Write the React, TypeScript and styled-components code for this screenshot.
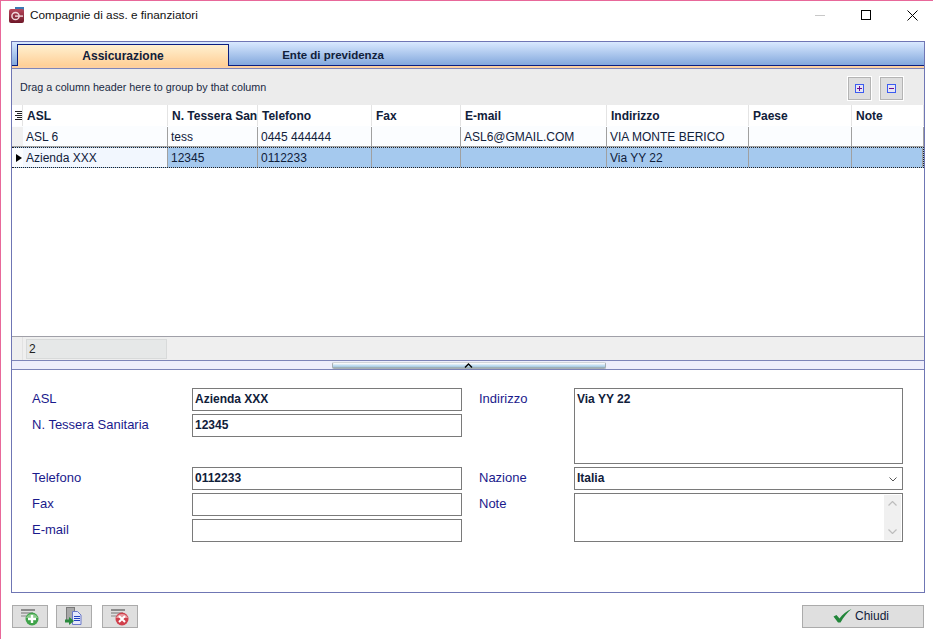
import React from 'react';
import styled, { createGlobalStyle } from 'styled-components';

const GlobalStyle = createGlobalStyle`
  html, body { margin: 0; padding: 0; background: #fff; }
  body { font-family: "Liberation Sans", Arial, sans-serif; font-size: 12px; color: #000; }
`;

const Win = styled.div`
  width: 933px;
  height: 639px;
  box-sizing: border-box;
  border-top: 1px solid #e8689a;
  border-left: 1px solid #e8689a;
  display: flex;
  flex-direction: column;
  overflow: hidden;
  background: #fff;
`;

const TitleBar = styled.div`
  height: 28px;
  margin-bottom: 2px;
  flex: none;
  display: flex;
  align-items: center;
  padding-left: 8px;
  gap: 5px;
  font-size: 11.8px;
  color: #111;
`;

const Title = styled.span`
  flex: 1;
`;

const WinButtons = styled.div`
  display: flex;
  align-items: center;
  margin-right: -2px;
`;

const WinBtn = styled.div`
  width: 46px;
  height: 28px;
  display: flex;
  align-items: center;
  justify-content: center;
`;

const Panel = styled.div`
  margin: 10px 8px 0 10px;
  height: 552px;
  box-sizing: border-box;
  border: 1px solid #6f76b4;
  display: flex;
  flex-direction: column;
  flex: none;
`;

const TabStrip = styled.div`
  height: 24px;
  box-sizing: border-box;
  flex: none;
  display: flex;
  padding: 2px 0 0 5px;
  background: linear-gradient(to bottom, #d9e9ff, #83a8dd);
  border-bottom: 1px solid #0b1f80;
`;

const Tab = styled.div<{ $active?: boolean }>`
  box-sizing: border-box;
  display: flex;
  align-items: center;
  justify-content: center;
  font-weight: bold;
  color: #10203a;
  ${p => p.$active ? `
    width: 212px;
    height: 22px;
    margin-bottom: -1px;
    font-size: 12px;
    background: linear-gradient(to bottom, #fff0d0, #ffcf96);
    border: 1px solid #0b1f80;
    border-bottom: none;
  ` : `
    width: 208px;
    height: 21px;
    font-size: 11.5px;
  `}
`;

const TabEdge = styled.div`
  height: 3px;
  box-sizing: border-box;
  flex: none;
  background: #fdd0a0;
  border-bottom: 1px solid #7d84b8;
`;

const GroupBar = styled.div`
  height: 36px;
  flex: none;
  background: #ececec;
  display: flex;
  align-items: center;
  justify-content: space-between;
  padding: 0 21px 0 8px;
  font-size: 10.75px;
  color: #1a2a44;
`;

const GroupText = styled.span`
  margin-top: -1px;
`;

const GroupTools = styled.div`
  display: flex;
  gap: 9px;
  margin-top: 3px;
`;

const ToolBtn = styled.div`
  width: 23px;
  height: 23px;
  box-sizing: border-box;
  background: #dedede;
  border: 1px solid #b4b4b4;
  outline: 1px solid #fff;
  display: flex;
  align-items: center;
  justify-content: center;
`;

const GridArea = styled.div`
  flex: 1;
  display: flex;
  flex-direction: column;
  background: #fff;
`;

const cols = '11px 145px 90px 114px 89px 146px 142px 103px 1fr';

const HeaderRow = styled.div`
  display: grid;
  grid-template-columns: ${cols};
  height: 21px;
  flex: none;
`;

const HeaderCell = styled.div`
  font-weight: bold;
  font-size: 12px;
  color: #10203a;
  padding: 4px 0 0 4px;
  border-right: 1px solid #e4e4e4;
  box-sizing: border-box;
  white-space: nowrap;
  overflow: hidden;
`;

const Corner = styled.div`
  display: flex;
  align-items: center;
  justify-content: center;
  padding-left: 2px;
  border-right: 1px solid #e4e4e4;
`;

const DataRow = styled.div<{ $selected?: boolean }>`
  display: grid;
  grid-template-columns: ${cols};
  height: 21px;
  box-sizing: border-box;
  flex: none;
  border-top: 1px solid #fbfdff;
  border-bottom: 1px solid #a0a0a0;
  background: #fbfdff;
  ${p => p.$selected && `
    background: #a5c9ee;
    border-top: 1px dotted #222;
    border-bottom: 1px dotted #222;
    border-right: 1px dotted #222;
  `}
`;

const Cell = styled.div<{ $first?: boolean }>`
  padding: 3px 0 0 3px;
  font-size: 12px;
  color: #10203a;
  box-sizing: border-box;
  border-right: 1px solid #a0a0a0;
  white-space: nowrap;
  overflow: hidden;
  ${p => p.$first && `background: #f2f7fe;`}
`;

const Indicator = styled.div<{ $current?: boolean }>`
  background: ${p => (p.$current ? '#fbfdff' : '#f0f0f0')};
  display: flex;
  align-items: center;
  justify-content: center;
`;

const Arrow = styled.div`
  width: 0;
  height: 0;
  border-left: 6px solid #000;
  border-top: 4.5px solid transparent;
  border-bottom: 4.5px solid transparent;
  margin-left: 2px;
`;

const Footer = styled.div`
  height: 25px;
  flex: none;
  box-sizing: border-box;
  background: #efefef;
  border-top: 1px solid #a0a0a8;
  border-bottom: 1px solid #7d84b8;
  display: flex;
`;

const FooterCorner = styled.div`
  width: 11px;
  box-sizing: border-box;
  border-right: 1px solid #e2e2e2;
  margin-right: 3px;
`;

const Counter = styled.div`
  width: 141px;
  height: 20px;
  margin-top: 2px;
  box-sizing: border-box;
  background: #e6e8e8;
  border: 1px solid #d8dada;
  padding: 2px 0 0 2px;
  font-size: 12px;
  color: #222;
`;

const Splitter = styled.div`
  height: 9px;
  flex: none;
  box-sizing: border-box;
  background: #eeeefb;
  border-bottom: 1px solid #7d84b8;
  padding-top: 1px;
  display: flex;
  justify-content: center;
  padding-right: 1px;
`;

const SplitHandle = styled.div`
  width: 274px;
  height: 7px;
  box-sizing: border-box;
  margin-left: 2px;
  border: 1px solid #a6aeb2;
  border-top-color: #d0d4d8;
  border-radius: 2px;
  background: linear-gradient(to bottom, #ffffff 0, #eef2f5 20%, #c4e0f4 45%, #b4d6ee 65%, #9cb0ba 90%);
  display: flex;
  justify-content: center;
  align-items: center;
`;

const Form = styled.div`
  height: 222px;
  flex: none;
  box-sizing: border-box;
  padding: 18px 0 0 20px;
  display: grid;
  grid-template-columns: 160px 270px 17px 95px 329px;
  grid-template-rows: 23px 23px 24px 23px 23px 23px;
  row-gap: 3px;
`;

const Label = styled.div<{ $col: number; $row: number }>`
  grid-column: ${p => p.$col};
  grid-row: ${p => p.$row};
  color: #1a1a8c;
  font-size: 13px;
  padding-top: 3px;
`;

const Input = styled.div<{ $row: number; $col?: number; $span?: number }>`
  grid-column: ${p => p.$col ?? 2};
  grid-row: ${p => p.$row} / span ${p => p.$span ?? 1};
  box-sizing: border-box;
  border: 1px solid #7a7a7a;
  background: #fff;
  font-weight: bold;
  font-size: 12px;
  padding: 3px 0 0 2px;
  color: #10203a;
  position: relative;
`;

const Chevron = styled.svg`
  position: absolute;
  right: 5px;
  top: 9px;
`;

const ScrollTrack = styled.div`
  position: absolute;
  top: 1px;
  right: 1px;
  bottom: 1px;
  width: 17px;
  background: #f0f0f0;
  display: flex;
  flex-direction: column;
  justify-content: space-between;
  align-items: center;
  padding: 6px 0;
  box-sizing: border-box;
`;

const BottomBar = styled.div`
  flex: 1;
  display: flex;
  align-items: flex-start;
  padding: 12px 9px 0 11px;
  gap: 8px;
`;

const ActionBtn = styled.div<{ $w: number; $offset?: number }>`
  width: ${p => p.$w}px;
  height: 23px;
  margin-left: ${p => p.$offset ?? 0}px;
  box-sizing: border-box;
  background: #dfdfdf;
  border: 1px solid #ababab;
  display: flex;
  align-items: center;
  justify-content: center;
`;

const CloseBtn = styled.div`
  width: 122px;
  height: 23px;
  margin-left: auto;
  padding: 0 4px 2px 0;
  box-sizing: border-box;
  background: #dfdfdf;
  border: 1px solid #ababab;
  display: flex;
  align-items: center;
  justify-content: center;
  gap: 3px;
  font-size: 12px;
  color: #10203a;
`;

const AppIcon = () => (
  <svg width="16" height="16" viewBox="0 0 16 16">
    <defs>
      <linearGradient id="appIconFill" x1="0" y1="0" x2="0" y2="1">
        <stop offset="0" stopColor="#b8485c" />
        <stop offset="1" stopColor="#6e1828" />
      </linearGradient>
    </defs>
    <rect x="6" y="0" width="9" height="5" fill="#3c78b4" />
    <rect x="0" y="2" width="15" height="14" rx="2" fill="url(#appIconFill)" />
    <circle cx="6.5" cy="9" r="3.6" fill="none" stroke="#f0d8dc" strokeWidth="1.5" />
    <rect x="6" y="8.4" width="8" height="1.4" fill="#f0d8dc" />
  </svg>
);

const ExpandIcon = ({ minus }: { minus?: boolean }) => (
  <svg width="9" height="9" viewBox="0 0 9 9">
    <rect x="0.5" y="0.5" width="8" height="8" fill="#e6e6f4" stroke="#3c5cf0" />
    <rect x="2" y="4" width="5" height="1" fill="#6a0a90" />
    {!minus && <rect x="4" y="2" width="1" height="5" fill="#6a0a90" />}
  </svg>
);

const Lines = () => (
  <>
    <rect x="2" y="2" width="14" height="2" fill="#8c8c8c" />
    <rect x="2" y="5" width="12" height="2" fill="#a8a8a8" />
    <rect x="2" y="8" width="8" height="2" fill="#b4b4b4" />
  </>
);

const AddIcon = () => (
  <svg width="22" height="19" viewBox="0 0 22 19">
    <Lines />
    <circle cx="13" cy="12" r="6.5" fill="#3fa34a" />
    <path d="M7 11a6.5 6.5 0 0 1 12 0z" fill="#8acb8c" />
    <rect x="11.8" y="8" width="2.4" height="8" fill="#fff" />
    <rect x="9" y="10.8" width="8" height="2.4" fill="#fff" />
  </svg>
);

const ImportIcon = () => (
  <svg width="20" height="19" viewBox="0 0 20 19">
    <rect x="2.5" y="0.5" width="8" height="14" fill="#a8a8a8" stroke="#7a7a7a" />
    <path d="M8.5 4.5h5l3.5 3.5v9.5h-8.5z" fill="#e4e8fb" stroke="#6a78c8" />
    <rect x="10" y="9" width="6" height="1" fill="#2040c0" />
    <rect x="10" y="11" width="6" height="1" fill="#2040c0" />
    <rect x="10" y="13" width="6" height="1" fill="#2040c0" />
    <path d="M1 12.5h4v-2.5l5 4-5 4v-2.5h-4z" fill="#2a8a3e" />
  </svg>
);

const DeleteIcon = () => (
  <svg width="22" height="19" viewBox="0 0 22 19">
    <Lines />
    <circle cx="13" cy="12" r="6.5" fill="#d0404c" />
    <path d="M7 11a6.5 6.5 0 0 1 12 0z" fill="#e89aa0" />
    <path d="M10 9l6 6M16 9l-6 6" stroke="#fff" strokeWidth="2" />
  </svg>
);

const columns = ['ASL', 'N. Tessera San', 'Telefono', 'Fax', 'E-mail', 'Indirizzo', 'Paese', 'Note'];
const rows = [
  ['ASL 6', 'tess', '0445 444444', '', 'ASL6@GMAIL.COM', 'VIA MONTE BERICO', '', ''],
  ['Azienda XXX', '12345', '0112233', '', '', 'Via YY 22', '', ''],
];

export default function App() {
  return (
    <>
      <GlobalStyle />
      <Win>
        <TitleBar>
          <AppIcon />
          <Title>Compagnie di ass. e finanziatori</Title>
          <WinButtons>
            <WinBtn>
              <svg width="10" height="10"><rect x="0" y="5" width="10" height="1" fill="#c8c8c8" /></svg>
            </WinBtn>
            <WinBtn>
              <svg width="10" height="10"><rect x="0.5" y="0.5" width="9" height="9" fill="none" stroke="#000" /></svg>
            </WinBtn>
            <WinBtn>
              <svg width="11" height="11"><path d="M0.5 0.5l10 10M10.5 0.5l-10 10" stroke="#000" /></svg>
            </WinBtn>
          </WinButtons>
        </TitleBar>
        <Panel>
          <TabStrip>
            <Tab $active>Assicurazione</Tab>
            <Tab>Ente di previdenza</Tab>
          </TabStrip>
          <TabEdge />
          <GroupBar>
            <GroupText>Drag a column header here to group by that column</GroupText>
            <GroupTools>
              <ToolBtn><ExpandIcon /></ToolBtn>
              <ToolBtn><ExpandIcon minus /></ToolBtn>
            </GroupTools>
          </GroupBar>
          <GridArea>
            <HeaderRow>
              <Corner>
                <svg width="7" height="10" viewBox="0 0 7 10">
                  <path d="M0 .5h7M2 2.5h5M0 4.5h7M2 6.5h5M0 8.5h7" stroke="#222" />
                </svg>
              </Corner>
              {columns.map(c => <HeaderCell key={c}>{c}</HeaderCell>)}
            </HeaderRow>
            {rows.map((r, i) => (
              <DataRow key={r[0]} $selected={i === 1}>
                <Indicator $current={i === 1}>{i === 1 && <Arrow />}</Indicator>
                {r.map((v, j) => (
                  <Cell key={j} $first={i === 1 && j === 0}>{v}</Cell>
                ))}
              </DataRow>
            ))}
          </GridArea>
          <Footer>
            <FooterCorner />
            <Counter>2</Counter>
          </Footer>
          <Splitter>
            <SplitHandle>
              <svg width="9" height="5" viewBox="0 0 9 5">
                <path d="M1 4.5l3.5-3.5 3.5 3.5" fill="none" stroke="#000" strokeWidth="1.4" />
              </svg>
            </SplitHandle>
          </Splitter>
          <Form>
            <Label $col={1} $row={1}>ASL</Label>
            <Input $row={1}>Azienda XXX</Input>
            <Label $col={1} $row={2}>N. Tessera Sanitaria</Label>
            <Input $row={2}>12345</Input>
            <Label $col={4} $row={1}>Indirizzo</Label>
            <Input $row={1} $col={5} $span={3}>Via YY 22</Input>
            <Label $col={1} $row={4}>Telefono</Label>
            <Input $row={4}>0112233</Input>
            <Label $col={4} $row={4}>Nazione</Label>
            <Input $row={4} $col={5}>
              Italia
              <Chevron width="8" height="5" viewBox="0 0 8 5">
                <path d="M0.5 0.5l3.5 3.5 3.5-3.5" fill="none" stroke="#555" />
              </Chevron>
            </Input>
            <Label $col={1} $row={5}>Fax</Label>
            <Input $row={5} />
            <Label $col={1} $row={6}>E-mail</Label>
            <Input $row={6} />
            <Label $col={4} $row={5}>Note</Label>
            <Input $row={5} $col={5} $span={2}>
              <ScrollTrack>
                <svg width="9" height="5" viewBox="0 0 9 5">
                  <path d="M0.5 4.5l4-4 4 4" fill="none" stroke="#bdbdbd" strokeWidth="1.2" />
                </svg>
                <svg width="9" height="5" viewBox="0 0 9 5">
                  <path d="M0.5 0.5l4 4 4-4" fill="none" stroke="#bdbdbd" strokeWidth="1.2" />
                </svg>
              </ScrollTrack>
            </Input>
          </Form>
        </Panel>
        <BottomBar>
          <ActionBtn $w={36}><AddIcon /></ActionBtn>
          <ActionBtn $w={36}><ImportIcon /></ActionBtn>
          <ActionBtn $w={36} $offset={2}><DeleteIcon /></ActionBtn>
          <CloseBtn>
            <svg width="19" height="14" viewBox="0 0 19 14">
              <path d="M0.5 7.5l3-1.5 3 3.5c3-4 7-7.5 12-9.5-4 3.5-8 8-11 13.5h-2.5z" fill="#22863a" />
            </svg>
            Chiudi
          </CloseBtn>
        </BottomBar>
      </Win>
    </>
  );
}
